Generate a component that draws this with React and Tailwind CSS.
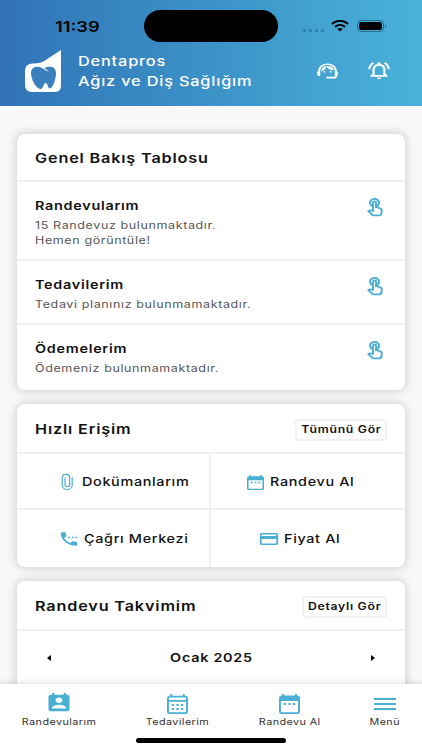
import React from 'react';
import {
  MdOutlineSupportAgent,
  MdOutlineNotificationsActive,
  MdOutlineTouchApp,
  MdSettingsPhone,
  MdOutlineCreditCard,
  MdPermContactCalendar,
} from 'react-icons/md';

const overview = [
  { title: 'Randevularım', lines: ['15 Randevuz bulunmaktadır.', 'Hemen görüntüle!'], height: 'h-[79px]' },
  { title: 'Tedavilerim', lines: ['Tedavi planınız bulunmamaktadır.'], height: 'h-[64px]' },
  { title: 'Ödemelerim', lines: ['Ödemeniz bulunmamaktadır.'], height: 'h-[64px]' },
];

const Logo = () => (
  <svg viewBox="0 0 36 43" className="mt-px h-[43px] w-[36px]">
    <path d="M7 13.500C14 13.500 18 12.500 23 8.500L36 0V36Q36 42 29 42H7Q0 42 0 35V21Q0 14 7 13.500Z" fill="#fff" />
    <path
      d="M6 23C6 17 12 15.500 17 18C19 19 21 21 24 21.500C22 20 20.500 19 19.500 18C24 15.500 31 16 31 23C31 30 27.500 38 25 38.500C22.500 38.500 23 33 20.500 33C18.500 33 18.500 39 15.500 39C11 39 6 29 6 23Z"
      fill="#3a80bd"
    />
  </svg>
);

const CalendarIcon = ({ className }) => (
  <svg viewBox="0 0 22 20" preserveAspectRatio="none" className={className}>
    <path
      fillRule="evenodd"
      d="M3.200 0H5.200V1.500H16.800V0H18.800V1.500H19.500Q22 1.500 22 4V17.500Q22 20 19.500 20H2.500Q0 20 0 17.500V4Q0 1.500 2.500 1.500H3.200ZM2 7V17Q2 18.300 3.300 18.300H18.700Q20 18.300 20 17V7Z"
      fill="currentColor"
    />
    <path d="M5 10H7.400M9.800 10H12.200M14.600 10H17" stroke="currentColor" strokeWidth="1.800" />
  </svg>
);

const CalendarGridIcon = ({ className }) => (
  <svg viewBox="0 0 22 20" preserveAspectRatio="none" className={className}>
    <path
      fillRule="evenodd"
      d="M3.500 0H5.500V1.800H16.500V0H18.500V1.800H19.500Q22 1.800 22 4.300V17.500Q22 20 19.500 20H2.500Q0 20 0 17.500V4.300Q0 1.800 2.500 1.800H3.500ZM2 3.600V6H20V3.600ZM2 7.800V17Q2 18.300 3.300 18.300H18.700Q20 18.300 20 17V7.800Z"
      fill="currentColor"
    />
    <path d="M5 11H7.400M9.800 11H12.200M14.600 11H17M5 15H7.400M9.800 15H12.200M14.600 15H17" stroke="currentColor" strokeWidth="1.900" />
  </svg>
);

const ClipIcon = () => (
  <svg viewBox="0 0 14 18" className="h-[18px] w-[14px]">
    <path
      d="M12.200 4.500V12C12.200 18 2.200 18 2.200 12V4.500C2.200 .2 9.700 .2 9.700 4.500V11.500C9.700 14.300 5 14.300 5 11.500V5"
      fill="none"
      stroke="currentColor"
      strokeWidth="1.200"
      strokeLinecap="round"
    />
  </svg>
);

const StatusBar = () => (
  <div className="flex h-[44px] items-start">
    <div className="w-[144px] pl-[55px] pt-[14px]">
      <p className="origin-left scale-x-[1.22] whitespace-nowrap text-[15px] leading-[25px] font-semibold text-black">11:39</p>
    </div>
    <div className="mt-[10px] h-[32px] w-[134px] rounded-full bg-black" />
    <div className="ml-[25px] mt-[29px] flex gap-[3px]">
      {[0, 1, 2, 3].map((i) => (
        <span key={i} className="size-[3px] rounded-full bg-[#2f7ba1]" />
      ))}
    </div>
    <svg viewBox="0 0 18 12" preserveAspectRatio="none" className="ml-[7px] mt-[20px] h-[12px] w-[18px]">
      <path d="M1 4C5.500-.2 12.500-.2 17 4" fill="none" stroke="#000" strokeWidth="2" />
      <path d="M4 7C7 4.400 11 4.400 14 7" fill="none" stroke="#000" strokeWidth="2" />
      <path d="M9 11.500L6.400 9C8 7.700 10 7.700 11.600 9Z" />
    </svg>
    <svg viewBox="0 0 30 12" className="ml-[8px] mt-[20px] h-[12px] w-[30px]">
      <rect x=".5" y=".5" width="26" height="11" rx="3.500" fill="none" stroke="#2b6c8c" />
      <rect x="2" y="2" width="23" height="8" rx="2.200" />
      <path d="M28 4.200C29.600 4.700 29.600 7.300 28 7.800Z" fill="#2b6c8c" />
    </svg>
  </div>
);

const CardHeader = ({ title, action, actionWidth, height }) => (
  <div className={`flex items-center justify-between border-b-2 border-[#f0f0f2] pt-[3px] pr-[18px] pl-[18px] ${height}`}>
    <h2 className="origin-left scale-x-[1.2] whitespace-nowrap text-[13.500px] font-semibold tracking-[0.7px]">{title}</h2>
    {action && (
      <button className={`flex h-[22px] items-center justify-center rounded-[4px] border-2 border-[#f1f1f3] ${actionWidth}`}>
        <span className="scale-x-[1.2] whitespace-nowrap text-[10.200px] font-semibold tracking-[0.6px]">{action}</span>
      </button>
    )}
  </div>
);

const Card = ({ children, className }) => (
  <section className={`overflow-hidden rounded-[8px] bg-white shadow-[0_0_8px_2px_rgba(0,0,0,0.14)] ${className}`}>{children}</section>
);

const QuickItem = ({ icon, label, className, gap }) => (
  <div className={`flex items-center border-[#f0f0f2] ${className}`}>
    <span className="text-[#4aafd5]">{icon}</span>
    <span className={`origin-left scale-x-[1.2] whitespace-nowrap text-[12px] font-medium tracking-[0.55px] ${gap}`}>{label}</span>
  </div>
);

const NavItem = ({ icon, label, className }) => (
  <div className={`flex shrink-0 flex-col items-center ${className}`}>
    <span className="flex h-[21px] items-center text-[#4aafd5]">{icon}</span>
    <span className="mt-[2px] scale-x-[1.2] whitespace-nowrap text-[9px] leading-[14px] tracking-[0.35px] text-[#333]">{label}</span>
  </div>
);

const App = () => {
  return (
    <div className="flex h-[750px] w-[422px] flex-col overflow-hidden bg-[#f8f8fb] font-['Inter','Liberation_Sans',sans-serif] text-[#111]">
      <header className="h-[106px] shrink-0 bg-linear-to-r from-[#3173b6] to-[#49b2da]">
        <StatusBar />
        <div className="flex pl-[25px] pt-[5px]">
          <Logo />
          <div className="ml-[17px] mt-[2px] w-[220px] text-[13.600px] leading-[20px] font-medium tracking-[0.68px] text-white">
            <p className="origin-left scale-x-[1.2] whitespace-nowrap">Dentapros</p>
            <p className="origin-left scale-x-[1.2] whitespace-nowrap">Ağız ve Diş Sağlığım</p>
          </div>
          <MdOutlineSupportAgent preserveAspectRatio="none" className="ml-[17px] mt-[12px] h-[20px] w-[25px] text-white" />
          <MdOutlineNotificationsActive preserveAspectRatio="none" className="ml-[26px] mt-[11px] h-[21px] w-[26px] text-white" />
        </div>
      </header>

      <main className="flex min-h-0 flex-1 flex-col gap-[14px] overflow-hidden px-[17px] pt-[28px]">
        <Card className="h-[256px] shrink-0">
          <CardHeader title="Genel Bakış Tablosu" height="h-[48px]" />
          {overview.map((row) => (
            <div key={row.title} className={`flex justify-between border-b-2 border-[#f0f0f2] pl-[18px] pr-[18px] pt-[15px] last:border-b-0 ${row.height}`}>
              <div>
                <h3 className="origin-left scale-x-[1.2] whitespace-nowrap text-[12px] leading-[18px] font-semibold tracking-[0.6px]">{row.title}</h3>
                <div className="mt-[3px] text-[10.400px] leading-[15px] tracking-[0.53px] text-[#555]">
                  {row.lines.map((line) => (
                    <p key={line} className="origin-left scale-x-[1.2] whitespace-nowrap">{line}</p>
                  ))}
                </div>
              </div>
              <MdOutlineTouchApp preserveAspectRatio="none" className="h-[21px] w-[24px] text-[#4aafd5]" />
            </div>
          ))}
        </Card>

        <Card className="h-[163px] shrink-0">
          <CardHeader title="Hızlı Erişim" action="Tümünü Gör" actionWidth="w-[92px]" height="h-[50px]" />
          <div className="grid grid-cols-2 grid-rows-[56px_57px]">
            <QuickItem label="Dokümanlarım" gap="ml-[8px]" className="border-r-2 border-b-2 pt-[2px] pl-[43px]" icon={<ClipIcon />} />
            <QuickItem label="Randevu Al" gap="ml-[6px]" className="border-b-2 pt-[2px] pl-[36px]" icon={<CalendarIcon className="h-[15px] w-[17px]" />} />
            <QuickItem
              label="Çağrı Merkezi"
              gap="ml-[4px]"
              className="border-r-2 pl-[41px]"
              icon={<MdSettingsPhone preserveAspectRatio="none" className="h-[18px] w-[22px]" />}
            />
            <QuickItem
              label="Fiyat Al"
              gap="ml-[4px]"
              className="pl-[47px]"
              icon={<MdOutlineCreditCard preserveAspectRatio="none" className="h-[18px] w-[22px]" />}
            />
          </div>
        </Card>

        <Card className="h-[200px] shrink-0">
          <CardHeader title="Randevu Takvimim" action="Detaylı Gör" actionWidth="w-[85px]" height="h-[50px]" />
          <div className="flex h-[53px] items-center justify-between pr-[30px] pl-[30px]">
            <svg viewBox="0 0 4 6" className="h-[6px] w-[4px]">
              <path d="M4 0V6L0 3Z" />
            </svg>
            <span className="scale-x-[1.2] text-[12px] font-semibold tracking-[0.6px]">Ocak 2025</span>
            <svg viewBox="0 0 4 6" className="h-[6px] w-[4px]">
              <path d="M0 0V6L4 3Z" />
            </svg>
          </div>
        </Card>
      </main>

      <footer className="relative h-[66px] shrink-0 bg-white shadow-[0_0_6px_1px_rgba(0,0,0,0.14)]">
        <nav className="flex pt-[8px]">
          <NavItem label="Randevularım" className="w-[118px]" icon={<MdPermContactCalendar preserveAspectRatio="none" className="mt-px h-[22px] w-[28px]" />} />
          <NavItem label="Tedavilerim" className="w-[119px]" icon={<CalendarGridIcon className="mt-[2px] h-[20px] w-[21px]" />} />
          <NavItem label="Randevu Al" className="w-[105px]" icon={<CalendarIcon className="mt-[2px] h-[20px] w-[21px]" />} />
          <NavItem
            label="Menü"
            className="w-[86px]"
            icon={
              <svg viewBox="0 0 22 12" className="mt-[3px] h-[12px] w-[22px]">
                <path d="M0 1H22M0 6H22M0 11H22" stroke="currentColor" strokeWidth="2" />
              </svg>
            }
          />
        </nav>
        <div className="absolute bottom-[7px] left-[136px] h-[5px] w-[150px] rounded-full bg-black" />
      </footer>
    </div>
  );
};

export default App;
